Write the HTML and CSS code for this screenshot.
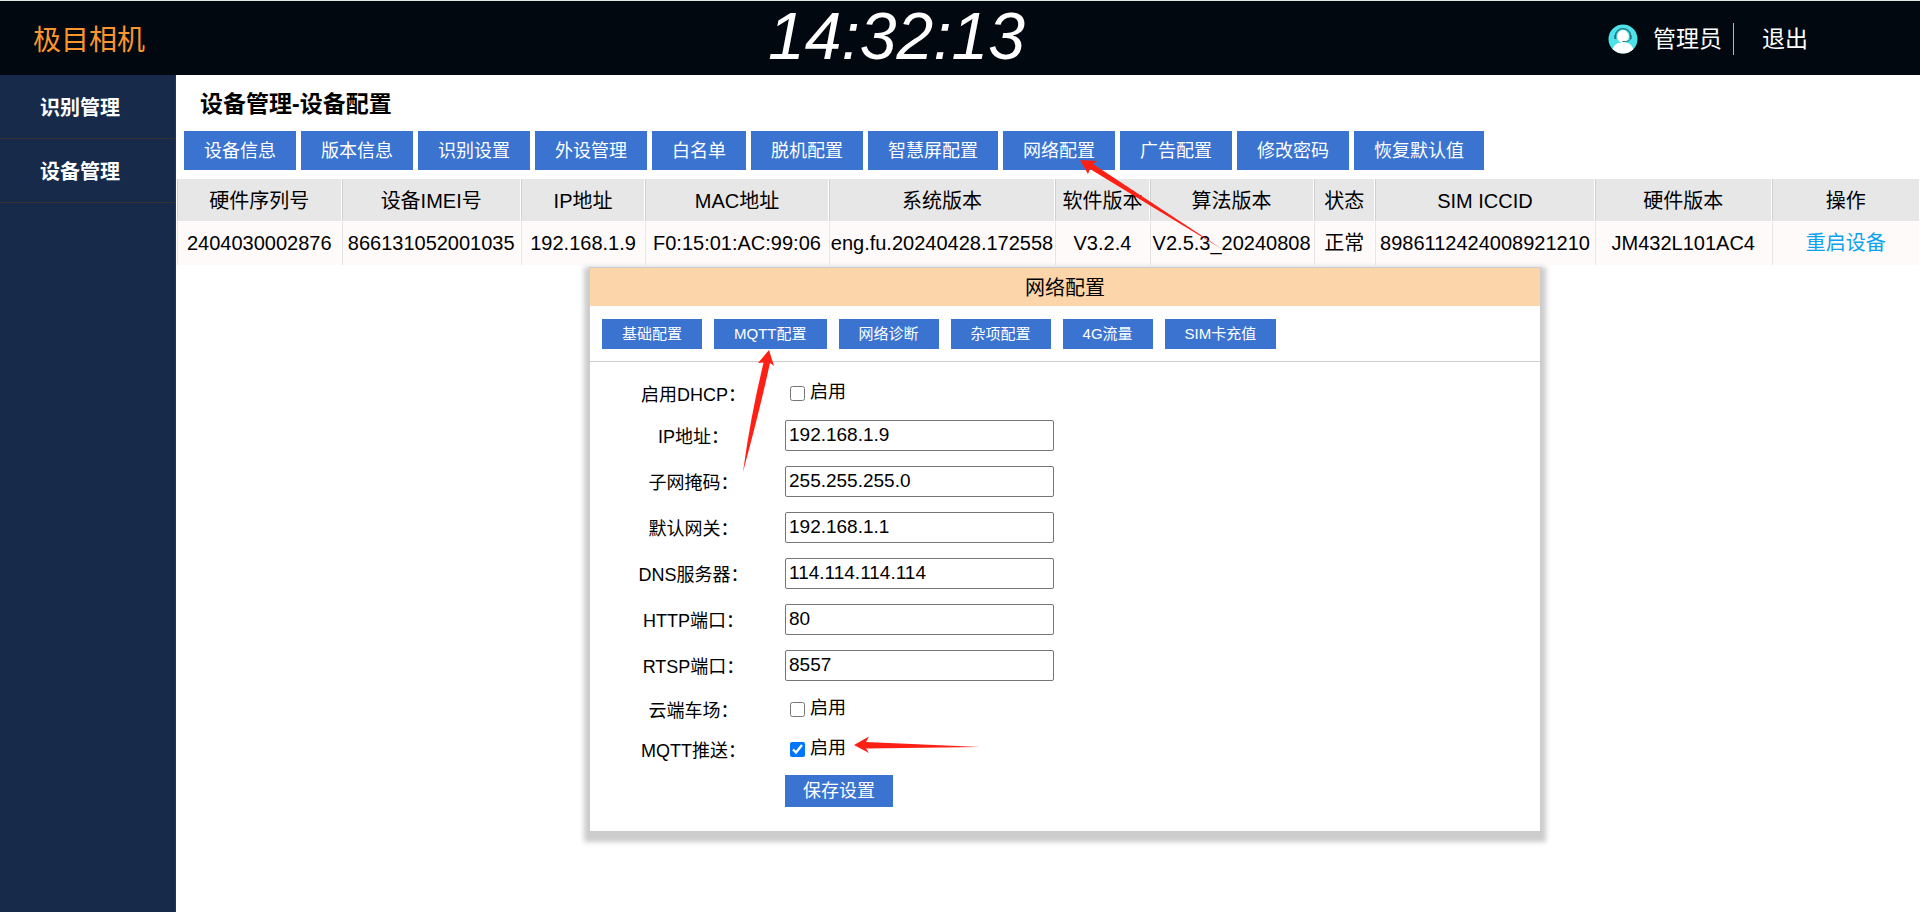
FILE: index.html
```html
<!DOCTYPE html>
<html lang="zh-CN">
<head>
<meta charset="utf-8">
<title>极目相机</title>
<link rel="stylesheet" href="styles.css">
</head>
<body>
<header class="topbar">
  <div class="brand">极目相机</div>
  <time class="clock">14:32:13</time>
  <div class="user">
    <svg class="avatar" viewBox="0 0 30 30" aria-hidden="true">
      <defs><clipPath id="disc"><circle cx="15" cy="15" r="14.5"/></clipPath></defs>
      <circle cx="15" cy="15" r="14.5" fill="#4be2ea"/>
      <g clip-path="url(#disc)">
        <path d="M3 30Q5 18.500 13 18.500H17Q25 18.500 27 30Z" fill="#fff"/>
        <ellipse cx="15" cy="12.500" rx="5.800" ry="6.500" fill="#fff"/>
        <path d="M7.500 11.500a7.500 6.800 0 0 1 15 0" fill="none" stroke="#2b6f7c" stroke-width="1.200"/>
        <path d="M7.300 11v4M22.700 11v4" stroke="#2b6f7c" stroke-width="2"/>
        <path d="M22.500 15q-1 2.500-6.500 2.500h-1.500" fill="none" stroke="#2b6f7c" stroke-width="1"/>
      </g>
    </svg>
    <span class="user-name">管理员</span>
    <a class="logout" href="#">退出</a>
  </div>
</header>
<div class="body">
  <nav class="sidebar">
    <a href="#">识别管理</a>
    <a href="#">设备管理</a>
  </nav>
  <main class="content">
    <h1 class="title">设备管理-设备配置</h1>
    <div class="toolbar">
      <button class="btn">设备信息</button>
      <button class="btn">版本信息</button>
      <button class="btn">识别设置</button>
      <button class="btn">外设管理</button>
      <button class="btn">白名单</button>
      <button class="btn">脱机配置</button>
      <button class="btn">智慧屏配置</button>
      <button class="btn">网络配置</button>
      <button class="btn">广告配置</button>
      <button class="btn">修改密码</button>
      <button class="btn">恢复默认值</button>
    </div>
    <table class="devices">
      <colgroup>
        <col class="c-serial"><col class="c-imei"><col class="c-ip"><col class="c-mac"><col class="c-system"><col class="c-soft"><col class="c-algo"><col class="c-state"><col class="c-sim"><col class="c-hard"><col class="c-action">
      </colgroup>
      <thead>
        <tr><th>硬件序列号</th><th>设备IMEI号</th><th>IP地址</th><th>MAC地址</th><th>系统版本</th><th>软件版本</th><th>算法版本</th><th>状态</th><th>SIM ICCID</th><th>硬件版本</th><th>操作</th></tr>
      </thead>
      <tbody>
        <tr><td>2404030002876</td><td>866131052001035</td><td>192.168.1.9</td><td>F0:15:01:AC:99:06</td><td>eng.fu.20240428.172558</td><td>V3.2.4</td><td>V2.5.3_20240808</td><td>正常</td><td>8986112424008921210</td><td>JM432L101AC4</td><td><a href="#">重启设备</a></td></tr>
      </tbody>
    </table>

    <section class="dialog" role="dialog" aria-labelledby="dialog-title">
      <h2 class="dialog-title" id="dialog-title">网络配置</h2>
      <div class="tabs">
        <button class="btn small">基础配置</button>
        <button class="btn small">MQTT配置</button>
        <button class="btn small">网络诊断</button>
        <button class="btn small">杂项配置</button>
        <button class="btn small">4G流量</button>
        <button class="btn small">SIM卡充值</button>
      </div>
      <form class="form">
        <div class="row check"><span class="label">启用DHCP：</span><label class="option"><input type="checkbox">启用</label></div>
        <div class="row"><label class="label" for="ip">IP地址：</label><input class="field" id="ip" type="text" value="192.168.1.9"></div>
        <div class="row"><label class="label" for="mask">子网掩码：</label><input class="field" id="mask" type="text" value="255.255.255.0"></div>
        <div class="row"><label class="label" for="gateway">默认网关：</label><input class="field" id="gateway" type="text" value="192.168.1.1"></div>
        <div class="row"><label class="label" for="dns">DNS服务器：</label><input class="field" id="dns" type="text" value="114.114.114.114"></div>
        <div class="row"><label class="label" for="http">HTTP端口：</label><input class="field" id="http" type="text" value="80"></div>
        <div class="row"><label class="label" for="rtsp">RTSP端口：</label><input class="field" id="rtsp" type="text" value="8557"></div>
        <div class="row check"><span class="label">云端车场：</span><label class="option"><input type="checkbox">启用</label></div>
        <div class="row check"><span class="label">MQTT推送：</span><label class="option"><input type="checkbox" checked>启用</label></div>
        <div class="row action"><button class="btn save" type="button">保存设置</button></div>
      </form>
      <svg class="arrow arrow-tab" viewBox="0 0 34 124" aria-hidden="true"><path d="M27 1L32 17L28 14Q18 60 1 123Q8 70 21.500 13.500L16 14Z"/></svg>
      <svg class="arrow arrow-push" viewBox="0 0 128 20" aria-hidden="true"><path d="M1 10L16 1.500L13 7L127 12L13 13.500L16 18Z"/></svg>
    </section>
    <svg class="arrow arrow-menu" viewBox="0 0 146 92" aria-hidden="true"><path d="M1 1L18 2L14 5L143 90Q75 49 11 10L9 15Z"/></svg>
  </main>
</div>
</body>
</html>
```

FILE: styles.css
```css
* { box-sizing: border-box; }

body {
  margin: 0;
  min-height: 100vh;
  display: flex;
  flex-direction: column;
  background: #fff;
  color: #000;
  font-family: "Liberation Sans", "Noto Sans CJK SC", sans-serif;
}

a { text-decoration: none; }

.topbar {
  display: flex;
  align-items: center;
  height: 75px;
  border-top: 1px solid #dde8e2;
  background: #01080f;
  color: #fff;
}

.brand {
  flex: 0 0 40%;
  padding-left: 33px;
  color: #fb962e;
  font-size: 28px;
}

.clock {
  padding-bottom: 4px;
  font-size: 66px;
  font-style: italic;
  line-height: 68px;
}

.user {
  display: flex;
  align-items: center;
  margin-left: auto;
  padding: 2px 112px 0 0;
  font-size: 23px;
  line-height: 32px;
}

.avatar {
  width: 30px;
  height: 30px;
  margin-right: 15px;
}

.user-name {
  padding-right: 11px;
  border-right: 1px solid #b4b6b8;
}

.logout {
  padding-left: 28px;
  color: #fff;
}

.body {
  display: flex;
  flex: 1;
}

.sidebar {
  flex: 0 0 176px;
  border-right: 1px solid #333;
  background: #172a4a;
}

.sidebar a {
  display: block;
  padding: 4px 0 0 40px;
  border-bottom: 1px solid #333;
  color: #fff;
  font-size: 20px;
  font-weight: bold;
  line-height: 59px;
}

.content {
  position: relative;
  flex: 1;
  min-width: 0;
}

.title {
  margin: 0;
  padding: 12px 0 10px 24px;
  font-size: 23px;
  line-height: 34px;
}

.toolbar {
  display: flex;
  gap: 5px;
  padding: 0 8px 8px;
}

.btn {
  height: 39px;
  padding: 0 20px;
  border: 0;
  background: #3b74d0;
  color: #fff;
  font-family: inherit;
  font-size: 18px;
  line-height: 30px;
  white-space: nowrap;
}

.devices {
  width: 100%;
  border-spacing: 1px;
  table-layout: fixed;
  font-size: 20px;
  line-height: 30px;
  text-align: center;
}

.devices th,
.devices td {
  height: 42px;
  padding: 2px 0 0;
  border-left: 1px solid #d0d0d0;
  background: #e7e7e7;
  font-weight: normal;
  white-space: nowrap;
}

.devices td {
  height: 43px;
  padding: 0 0 2px;
  border-color: #e4e4e4;
  background: #fffafa;
}

.devices a { color: #0aa3ee; }

.c-serial { width: 9.44%; }
.c-imei { width: 10.3%; }
.c-ip { width: 7.12%; }
.c-mac { width: 10.54%; }
.c-system { width: 13.02%; }
.c-soft { width: 5.39%; }
.c-algo { width: 9.41%; }
.c-state { width: 3.5%; }
.c-sim { width: 12.62%; }
.c-hard { width: 10.16%; }
.c-action { width: 8.5%; }

.dialog {
  position: absolute;
  top: 192px;
  left: 413px;
  width: 952px;
  border: 1px solid #ccc;
  background: #fff;
  box-shadow: 0 5px 5px 5px #ccc;
}

.dialog-title {
  margin: 0;
  padding-top: 2px;
  background: #fdd5aa;
  font-size: 20px;
  font-weight: normal;
  line-height: 36px;
  text-align: center;
}

.tabs {
  display: flex;
  gap: 12px;
  padding: 13px 12px 12px;
  border-bottom: 1px solid #ccc;
}

.small {
  height: 30px;
  font-size: 15px;
  line-height: 28px;
}

.form {
  padding: 10px 12px 17px;
  font-size: 18px;
}

.row {
  display: grid;
  grid-template-columns: 183px 1fr;
  align-items: center;
  min-height: 46px;
}

.check { min-height: 40px; }

.label {
  padding-top: 3px;
  line-height: 28px;
  text-align: center;
}

.check .label { padding-top: 6px; }

.field {
  width: 269px;
  height: 31px;
  padding: 0 3px;
  border: 1px solid #767676;
  border-radius: 2px;
  background: #fff;
  color: #000;
  font-family: inherit;
  font-size: 19px;
}

.option {
  display: flex;
  align-items: center;
  gap: 5px;
  padding-left: 5px;
  line-height: 28px;
}

.option input {
  width: 15px;
  height: 15px;
  margin: 2px 0 0;
}

.save {
  grid-column: 2;
  justify-self: start;
  height: 32px;
  padding: 0 18px;
}

.arrow {
  position: absolute;
  fill: #ff2015;
  pointer-events: none;
}

.arrow-menu {
  top: 84px;
  left: 903px;
  width: 146px;
  height: 92px;
}

.arrow-tab {
  top: 81px;
  left: 152px;
  width: 34px;
  height: 124px;
}

.arrow-push {
  top: 467px;
  left: 263px;
  width: 128px;
  height: 20px;
}
```
